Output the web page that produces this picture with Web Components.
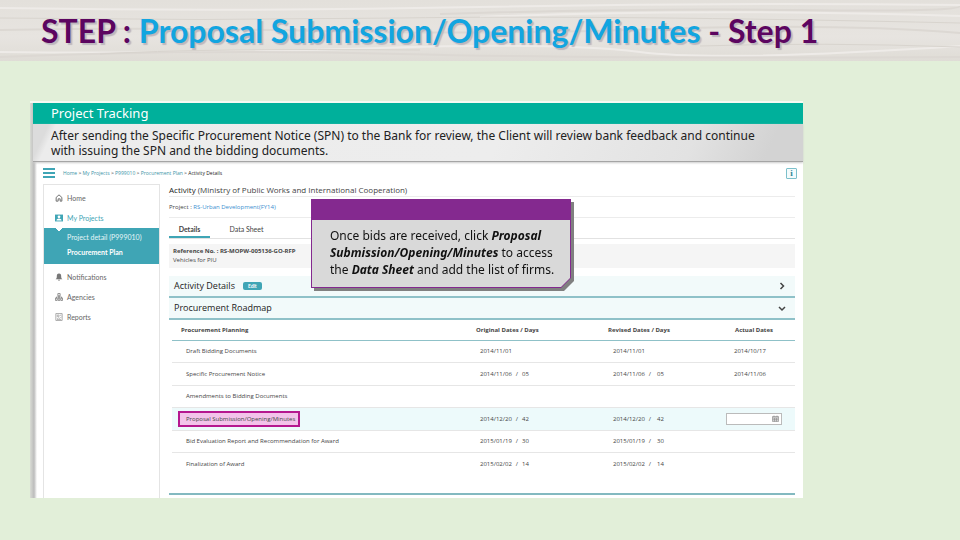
<!DOCTYPE html>
<html lang="en">
<head>
<meta charset="utf-8">
<title>Proposal Submission/Opening/Minutes</title>
<style>
  body {
    margin: 0;
    min-height: 100vh;
    background: #e2efd9;
    font-family: "Noto Sans", "Open Sans", sans-serif;
  }
</style>
</head>
<body>
<slide-title>STEP : <em>Proposal Submission/Opening/Minutes</em> - Step 1</slide-title>
<tracking-panel heading="Project Tracking">
  <span slot="intro">After sending the Specific Procurement Notice (SPN) to the Bank for review, the Client will review bank feedback and continue with issuing the SPN and the bidding documents.</span>
  <side-nav slot="nav">
    <nav-item icon="home">Home</nav-item>
    <nav-item icon="projects" active>My Projects
      <a slot="sub" href="#detail">Project detail (P999010)</a>
      <a slot="sub" href="#plan" class="current">Procurement Plan</a>
    </nav-item>
    <nav-item icon="bell">Notifications</nav-item>
    <nav-item icon="agencies">Agencies</nav-item>
    <nav-item icon="reports">Reports</nav-item>
  </side-nav>
  <activity-head></activity-head>
  <fold-bar badge="Edit">Activity Details</fold-bar>
  <fold-bar open>Procurement Roadmap</fold-bar>
  <road-map></road-map>
  <note-callout slot="note">Once bids are received, click <b>Proposal Submission/Opening/Minutes</b> to access the <b>Data Sheet</b> and add the list of firms.</note-callout>
</tracking-panel>

<script>
const icons = {
  home: '<path d="M2 6 7 1.500 12 6v6.500H9V8.500H5.500v4H2z" fill="none" stroke="#666" stroke-width="1.600"/>',
  projects: '<path d="M0 1h14v12H0z" fill="#3fa5b5"/><circle cx="7" cy="5" r="2.400" fill="#fff"/><path d="M2.500 11.500c0-5 9-5 9 0z" fill="#fff"/>',
  bell: '<path d="M7 1c-3 0-3.800 2-3.800 4.500C3.200 8.500 2.500 9.500 1 11h12c-1.500-1.500-2.200-2.500-2.200-5.500C10.800 3 10 1 7 1z" fill="#777"/><path d="M5 12h4l-2 1.800z" fill="#777"/>',
  agencies: '<path d="M5 1h4v4H5zM.8 9h3v4h-3zM5.500 9h3v4h-3zM10.200 9h3v4h-3zM7 5v4M2.300 9V7h9.400v2" fill="none" stroke="#666" stroke-width="1.200"/>',
  reports: '<path d="M1.500 1h11v12h-11z" fill="none" stroke="#888" stroke-width="1.200"/><path d="M4 3.500h3v3H4zM8.500 4h2.500M3.500 10.500l3-2 2 1 3-3M3.500 11.500h7" fill="none" stroke="#888"/>'
}

// base class, puts the markup in an open shadow root
class Base extends HTMLElement {
  constructor () {
    super()
    this.attachShadow({ mode: 'open' })
  }

  connectedCallback () {
    this.shadowRoot.innerHTML = this.render()
  }
}

customElements.define('slide-title', class extends Base {
  render () {
    return `
    <style>
    :host {
      display: block;
      position: relative;
      overflow: hidden;
      height: 61px;
      background: linear-gradient(#e3e0db, #e7e4e0 60%, #dfdcd6);
    }
    svg { position: absolute; inset: 0; width: 100%; height: 100%; }
    h1 {
      position: relative;
      margin: 0;
      padding-left: 41px;
      font: bold 32px/61px Lato, sans-serif;
      white-space: nowrap;
      color: #5c0560;
      text-shadow: 2px 2px 1px #bdb7be;
    }
    ::slotted(em) { font-style: normal; color: #12a5e0; }
    </style>
    <svg viewBox="0 0 960 61" preserveAspectRatio="none" fill="none" aria-hidden="true">
      <path d="M0 8Q240 12 480 7T960 5M0 52Q200 54 380 48T640 52 960 46M480 17Q700 8 960 16" stroke="#eeebe8" stroke-width="2"/>
      <path d="M0 30Q160 27 320 31T660 29 960 33M0 57Q200 49 400 54T960 57M440 14Q640 8 800 10T960 6" stroke="#dcd8d3" stroke-width="2"/>
      <path d="M0 18Q200 21 400 18T960 23M100 54Q200 48 420 50M700 46Q820 42 960 47" stroke="#d8d4ce" stroke-width="1"/>
    </svg>
    <h1><slot></slot></h1>
    `
  }
})

customElements.define('tracking-panel', class extends Base {
  render () {
    return `
    <style>
    :host {
      display: block;
      position: relative;
      margin: 40px 157px 42px 30px;
      padding: 0 0 0 3px;
      background: linear-gradient(90deg, #d9dcd5, #bcbcbc 4px, #fff 7px);
      border-top: 2px solid #f5faf2;
    }
    header { background: #00b09b; }
    h2 {
      margin: 0;
      padding-left: 18px;
      font-size: 13px;
      font-weight: normal;
      line-height: 21px;
      color: #fff;
    }
    .intro {
      padding: 4px 40px 3px 18px;
      background: linear-gradient(115deg, #dcdcdc 2%, #ececec 3%, #ededed 60%, #e2e2e2 85%, #d3d3d3 95%);
      border-bottom: 1px solid #a5a5a5;
      box-shadow: 0 1px 2px #ccc;
      font-size: 12px;
      line-height: 15px;
      color: #222;
    }
    .app {
      display: grid;
      grid-template-columns: 117px 1fr;
      column-gap: 9px;
      padding: 5px 8px 0 10px;
      font-family: "Open Sans", sans-serif;
      font-size: 6px;
      color: #444;
    }
    .bar {
      grid-column: 1 / 3;
      display: flex;
      align-items: center;
      height: 12px;
      margin-right: -2px;
      margin-bottom: 5px;
    }
    .menu {
      width: 12px;
      height: 10px;
      margin-right: 8px;
      padding: 0;
      border: 0;
      background: repeating-linear-gradient(#3fa5b5 0 2px, transparent 2px 4px);
    }
    nav { flex: 1; font-size: 5px; color: #222; }
    a { color: #3c93a6; text-decoration: none; }
    .info {
      width: 11px;
      height: 11px;
      padding: 0;
      border: 1px solid #7cc0cb;
      border-radius: 1px;
      background: #f4fbfc;
      font: bold 9px/9px "Liberation Serif", serif;
      color: #2f8796;
    }
    main { border-bottom: 2px solid #83b9c0; padding-bottom: 18px; margin-bottom: 3px; min-width: 0; }
    </style>
    <header><h2>${this.getAttribute('heading')}</h2></header>
    <div class="intro"><slot name="intro"></slot></div>
    <div class="app">
      <div class="bar">
        <button class="menu" aria-label="Menu"></button>
        <nav><a href="#home">Home</a> &gt; <a href="#projects">My Projects</a> &gt; <a href="#p">P999010</a> &gt; <a href="#plan">Procurement Plan</a> &gt; Activity Details</nav>
        <button class="info">i</button>
      </div>
      <slot name="nav"></slot>
      <main><slot></slot></main>
    </div>
    <slot name="note"></slot>
    `
  }
})

customElements.define('side-nav', class extends Base {
  render () {
    return `
    <style>
    :host { display: block; padding-top: 3px; border: 1px solid #e4e4e4; border-bottom: 0; }
    </style>
    <slot></slot>
    `
  }
})

customElements.define('nav-item', class extends Base {
  render () {
    const active = this.hasAttribute('active')
    return `
    <style>
    :host { display: block; font: 7px Lato, sans-serif; color: #666; }
    .item {
      display: flex;
      align-items: center;
      gap: 4px;
      height: 20px;
      padding-left: 11px;
      color: inherit;
      text-decoration: none;
    }
    :host([active]) .item { color: #3fa5b5; }
    svg { width: 8px; height: 8px; }
    .sub {
      display: flex;
      flex-direction: column;
      margin-bottom: 3px;
      padding: 2px 0 4px 23px;
      background:
        linear-gradient(45deg, transparent 50%, #fff 50%) 11px 0 / 4px 4px no-repeat,
        linear-gradient(-45deg, transparent 50%, #fff 50%) 15px 0 / 4px 4px no-repeat,
        #3fa5b5;
    }
    ::slotted(a) { line-height: 15px; color: #e6f6f8; text-decoration: none; white-space: nowrap; }
    ::slotted(a.current) { font-weight: bold; color: #fff; }
    </style>
    <a class="item" href="#"><svg viewBox="0 0 14 14" aria-hidden="true">${icons[this.getAttribute('icon')]}</svg><span><slot></slot></span></a>
    ${active ? '<div class="sub"><slot name="sub"></slot></div>' : ''}
    `
  }
})

customElements.define('activity-head', class extends Base {
  render () {
    return `
    <style>
    :host { display: block; margin-bottom: 8px; }
    h3 { margin: 0; font-size: 8px; font-weight: normal; line-height: 12px; border-bottom: 1px solid #ececec; }
    h3 b { font-weight: 500; color: #222; }
    p { margin: 0; line-height: 9px; }
    .project { line-height: 19px; padding-top: 1px; border-bottom: 1px solid #ececec; }
    a { color: #3c8fd0; text-decoration: none; }
    .tabs { display: flex; border-bottom: 1px solid #e2e2e2; }
    .tabs button {
      width: 41px;
      height: 20px;
      padding: 3px 0 0;
      border: 0;
      border-bottom: 2px solid transparent;
      background: none;
      font: 7px Lato, sans-serif;
      color: #444;
    }
    .tabs .on { font-weight: bold; border-color: #3fa5b5; }
    .tabs button + button { margin-left: 16px; }
    .ref { margin-top: 5px; padding: 3px 4px; background: #f5f5f5; }
    </style>
    <h3><b>Activity</b> (Ministry of Public Works and International Cooperation)</h3>
    <p class="project">Project : <a href="#rs">RS-Urban Development(FY14)</a></p>
    <div class="tabs"><button class="on">Details</button><button>Data Sheet</button></div>
    <div class="ref">
      <p><b>Reference No. : RS-MOPW-005136-GO-RFP</b></p>
      <p>Vehicles for PIU</p>
    </div>
    `
  }
})

customElements.define('fold-bar', class extends Base {
  render () {
    const badge = this.getAttribute('badge')
    const arrow = this.hasAttribute('open') ? 'M1 3l3 3 3-3' : 'M2.500 1l3 3-3 3'
    return `
    <style>
    :host { display: block; }
    .bar {
      display: flex;
      align-items: center;
      box-sizing: border-box;
      height: 22px;
      padding: 0 9px 1px 5px;
      background: #f2fafa;
      border-bottom: 2px solid #8fc1c8;
    }
    h4 { margin: 0; font-size: 9px; font-weight: 500; color: #222; }
    .badge {
      margin-left: 8px;
      padding: 0 5px;
      border: 0;
      border-radius: 2px;
      background: #3fa5b5;
      font: bold 5px/8px Lato, sans-serif;
      color: #fff;
    }
    .toggle { margin-left: auto; padding: 0; border: 0; background: none; display: flex; }
    svg { width: 8px; height: 8px; }
    </style>
    <div class="bar">
      <h4><slot></slot></h4>
      ${badge ? `<button class="badge">${badge}</button>` : ''}
      <button class="toggle" aria-label="Toggle section"><svg viewBox="0 0 8 8"><path d="${arrow}" fill="none" stroke="#444" stroke-width="1.500"/></svg></button>
    </div>
    `
  }
})

// name, original date, days, revised date, days, actual date
const steps = [
  ['Draft Bidding Documents', '2014/11/01', '', '2014/11/01', '', '2014/10/17'],
  ['Specific Procurement Notice', '2014/11/06', '05', '2014/11/06', '05', '2014/11/06'],
  ['Amendments to Bidding Documents', '', '', '', '', ''],
  ['Proposal Submission/Opening/Minutes', '2014/12/20', '42', '2014/12/20', '42', ''],
  ['Bid Evaluation Report and Recommendation for Award', '2015/01/19', '30', '2015/01/19', '30', ''],
  ['Finalization of Award', '2015/02/02', '14', '2015/02/02', '14', '']
]

customElements.define('road-map', class extends Base {
  date (day, days) {
    return days ? `${day}<i>/</i>${days}` : day
  }

  row ([name, first, firstDays, next, nextDays, actual]) {
    const current = name.startsWith('Proposal')
    return `
    <tr class="${current ? 'current' : ''}">
      <td>${current ? `<mark>${name}</mark>` : name}</td>
      <td>${this.date(first, firstDays)}</td>
      <td>${this.date(next, nextDays)}</td>
      <td>${current ? '<date-box></date-box>' : actual}</td>
    </tr>`
  }

  render () {
    return `
    <style>
    :host { display: block; padding-left: 3px; }
    table { width: 100%; height: 155px; table-layout: fixed; border-collapse: collapse; }
    col.date { width: 132px; }
    col.revised { width: 122px; }
    col.actual { width: 69px; }
    thead tr { height: 20px; }
    tbody tr { height: 22px; }
    th { padding: 0 9px; text-align: left; white-space: nowrap; border-bottom: 1px solid #8fc1c8; }
    th:nth-child(2), th:nth-child(3) { padding-left: 4px; }
    td { padding: 0 8px; border-bottom: 1px solid #e6e6e6; }
    td:first-child { padding-left: 14px; }
    td:nth-child(3) { padding-left: 9px; }
    tr:last-child td { border: 0; }
    .current td { background: #edfafb; }
    .current td:last-child { padding-left: 0; }
    mark {
      display: inline-block;
      vertical-align: middle;
      margin-left: -8px;
      padding: 0 3px 0 6px;
      border: 2px solid #b5178f;
      background: #f3c3ea;
      line-height: 12px;
      color: #444;
    }
    i { font-style: normal; margin: 0 4px; }
    td:nth-child(3) i { margin-right: 6px; }
    </style>
    <table>
      <colgroup><col><col class="date"><col class="revised"><col class="actual"></colgroup>
      <thead><tr><th>Procurement Planning</th><th>Original Dates / Days</th><th>Revised Dates / Days</th><th>Actual Dates</th></tr></thead>
      <tbody>${steps.map(s => this.row(s)).join('')}</tbody>
    </table>
    `
  }
})

customElements.define('date-box', class extends Base {
  render () {
    return `
    <style>
    :host { display: flex; align-items: center; box-sizing: border-box; width: 56px; height: 12px; padding-right: 2px; border: 1px solid #bbb; background: #fff; }
    input { flex: 1; min-width: 0; height: 8px; padding: 0 2px; border: 0; background: none; font: 6px "Open Sans", sans-serif; outline: 0; }
    svg { width: 7px; height: 7px; }
    </style>
    <input type="text" aria-label="Actual date">
    <svg viewBox="0 0 14 14" aria-hidden="true"><path d="M1 3h12v10H1zM4 1v3M10 1v3M1 6h12M1 9.500h12M5 6v7M9 6v7" fill="#ddd" stroke="#888" stroke-width="1.200"/></svg>
    `
  }
})

customElements.define('note-callout', class extends Base {
  render () {
    return `
    <style>
    :host {
      position: absolute;
      left: 281px;
      top: 96px;
      width: 260px;
      filter: drop-shadow(3px 3px 0 #808080);
    }
    .edge { padding: 1px; background: #84298f; clip-path: polygon(0 0, 100% 0, 100% calc(100% - 10px), calc(100% - 10px) 100%, 0 100%); }
    .box {
      border-top: 20px solid #84298f;
      padding: 7px 8px 9px 18px;
      background: #d9d9d9;
      font-size: 12px;
      line-height: 17px;
      color: #111;
      clip-path: polygon(0 0, 100% 0, 100% calc(100% - 9px), calc(100% - 9px) 100%, 0 100%);
    }
    ::slotted(b) { font-style: italic; }
    </style>
    <div class="edge"><div class="box"><slot></slot></div></div>
    `
  }
})
</script>
</body>
</html>
